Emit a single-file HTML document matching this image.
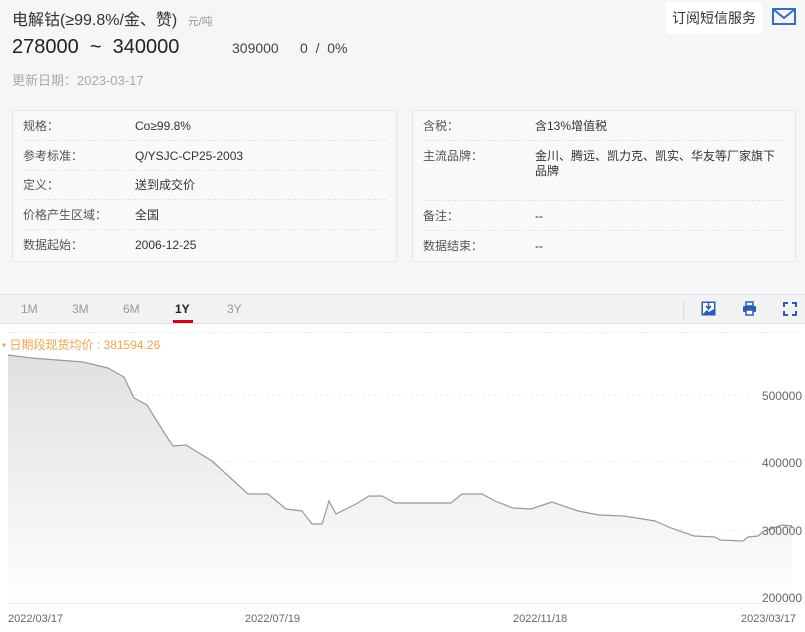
<!DOCTYPE html>
<html><head><meta charset="utf-8"><style>
*{margin:0;padding:0;box-sizing:border-box}
body{width:805px;height:632px;overflow:hidden;background:#f5f6f8;font-family:"Liberation Sans","Noto Sans CJK SC",sans-serif;position:relative;color:#333}
.a{position:absolute;white-space:nowrap}
.box{position:absolute;top:110px;height:152px;background:#f9f9fb;border:1px solid #e6e6ea}
.r{position:absolute;left:10px;right:10px;font-size:12px;color:#555;border-bottom:1px dashed #e3e3e3}
.r span{position:absolute;left:112px;color:#333}
.r.last{border-bottom:none}
</style></head><body>
<div class="a" style="left:12px;top:6px;font-size:16px;color:#333">电解钴(≥99.8%/金、赞) <span style="font-size:11px;color:#999;margin-left:6px">元/吨</span></div>
<div class="a" style="left:12px;top:36px;font-size:20px;color:#222;white-space:pre">278000  ~  340000</div>
<div class="a" style="left:232px;top:40px;font-size:14px;color:#444">309000</div>
<div class="a" style="left:300px;top:40px;font-size:14px;color:#444;white-space:pre">0  /  0%</div>
<div class="a" style="left:12px;top:70px;font-size:13px;color:#aaa">更新日期：2023-03-17</div>
<div class="a" style="left:666px;top:2px;width:96px;height:32px;background:#fff;border-radius:3px;font-size:14px;color:#333;line-height:32px;text-align:center">订阅短信服务</div>
<svg class="a" style="left:772px;top:8px" width="24" height="17" viewBox="0 0 24 17"><rect x="1" y="1" width="22" height="15" fill="none" stroke="#3a6bc4" stroke-width="2"/><path d="M1 1 L12 10 L23 1" fill="none" stroke="#3a6bc4" stroke-width="2"/></svg>

<div class="box" style="left:12px;width:385px">
<div class="r" style="top:0;height:30px;line-height:30px">规格：<span>Co≥99.8%</span></div>
<div class="r" style="top:30px;height:30px;line-height:30px">参考标准：<span>Q/YSJC-CP25-2003</span></div>
<div class="r" style="top:60px;height:29px;line-height:29px">定义：<span>送到成交价</span></div>
<div class="r" style="top:89px;height:30px;line-height:30px">价格产生区域：<span>全国</span></div>
<div class="r last" style="top:119px;height:30px;line-height:30px">数据起始：<span>2006-12-25</span></div>
</div>
<div class="box" style="left:412px;width:384px">
<div class="r" style="top:0;height:30px;line-height:30px">含税：<span>含13%增值税</span></div>
<div class="r" style="top:30px;height:60px;line-height:15px;padding-top:8px">主流品牌：<span style="top:8px;white-space:normal;width:240px">金川、腾远、凯力克、凯实、华友等厂家旗下品牌</span></div>
<div class="r" style="top:90px;height:30px;line-height:30px">备注：<span>--</span></div>
<div class="r last" style="top:120px;height:30px;line-height:30px">数据结束：<span>--</span></div>
</div>

<div class="a" style="left:0;top:294px;width:805px;height:30px;background:#f2f2f2;border-top:1px solid #e4e4e4;border-bottom:1px solid #e0e0e0"></div>
<div class="a" style="left:21px;top:302px;font-size:12px;color:#999">1M</div>
<div class="a" style="left:72px;top:302px;font-size:12px;color:#999">3M</div>
<div class="a" style="left:123px;top:302px;font-size:12px;color:#999">6M</div>
<div class="a" style="left:175px;top:302px;font-size:12px;color:#222;font-weight:bold">1Y</div>
<div class="a" style="left:173px;top:320px;width:20px;height:3px;background:#d0021b"></div>
<div class="a" style="left:227px;top:302px;font-size:12px;color:#999">3Y</div>
<div class="a" style="left:683px;top:300px;width:1px;height:20px;background:#ddd"></div>
<svg class="a" style="left:701px;top:301px" width="15" height="15" viewBox="0 0 15 15"><rect x="0.5" y="0.5" width="14" height="14" fill="#2b5db8"/><rect x="2" y="2" width="11" height="11" fill="#fff"/><path d="M7.5 2v5M5 5l2.5 3 2.5-3" stroke="#2b5db8" stroke-width="1.5" fill="none"/><path d="M2 13l4-4 2 2 5-3v5z" fill="#2b5db8"/></svg>
<svg class="a" style="left:742px;top:301px" width="15" height="15" viewBox="0 0 15 15"><rect x="4" y="1" width="7" height="4" fill="none" stroke="#2b5db8" stroke-width="1.5"/><rect x="1" y="5" width="13" height="6" rx="1" fill="#2b5db8"/><rect x="4" y="9" width="7" height="5" fill="#fff" stroke="#2b5db8" stroke-width="1.5"/></svg>
<svg class="a" style="left:783px;top:302px" width="14" height="14" viewBox="0 0 14 14" fill="none" stroke="#2b5db8" stroke-width="2"><path d="M1 5V1h4M9 1h4v4M13 9v4H9M5 13H1V9"/></svg>

<div class="a" style="left:0;top:324px;width:805px;height:308px;background:#fff"></div>
<div class="a" style="left:8px;top:332px;width:790px;border-top:1px dashed #eee"></div>
<div class="a" style="left:2px;top:336px;font-size:12px;color:#f5a34f">• 日期段现货均价 : 381594.26</div>
<svg class="a" style="left:0;top:324px" width="805" height="308" viewBox="0 324 805 308">
<defs><linearGradient id="g" x1="0" y1="0" x2="0" y2="1"><stop offset="0" stop-color="#e0e0e0"/><stop offset="1" stop-color="#fff"/></linearGradient></defs>
<g stroke="#ececec" stroke-dasharray="3,3"><line x1="8" y1="395" x2="750" y2="395"/><line x1="8" y1="462" x2="750" y2="462"/><line x1="8" y1="530" x2="750" y2="530"/></g>
<line x1="8" y1="603" x2="800" y2="603" stroke="#e6e6e6"/>
<path d="M8 355L31 358L83 362L108 368L124 377L134 398L147 405L165 434L173 446L186 445L212 461L248 494L268 494L286 509L302 511L312 524L322 524L329 501L336 514L356 504L369 496L382 496L395 503L451 503L462 494L482 494L495 501L513 508L531 509L552 502L578 511L599 515L624 516L655 521L671 528L694 536L715 537L720 540L743 541L748 537L758 536L764 531L782 525L792 526L792 603L8 603Z" fill="url(#g)"/>
<path d="M8 355L31 358L83 362L108 368L124 377L134 398L147 405L165 434L173 446L186 445L212 461L248 494L268 494L286 509L302 511L312 524L322 524L329 501L336 514L356 504L369 496L382 496L395 503L451 503L462 494L482 494L495 501L513 508L531 509L552 502L578 511L599 515L624 516L655 521L671 528L694 536L715 537L720 540L743 541L748 537L758 536L764 531L782 525L792 526" fill="none" stroke="#999" stroke-width="1.2"/>
<g font-family="Liberation Sans" font-size="12" fill="#666" text-anchor="end"><text x="802" y="400">500000</text><text x="802" y="467">400000</text><text x="802" y="535">300000</text><text x="802" y="602">200000</text></g>
<g font-family="Liberation Sans" font-size="11" fill="#666"><text x="8" y="622">2022/03/17</text><text x="245" y="622">2022/07/19</text><text x="513" y="622">2022/11/18</text><text x="741" y="622">2023/03/17</text></g>
</svg>
</body></html>
